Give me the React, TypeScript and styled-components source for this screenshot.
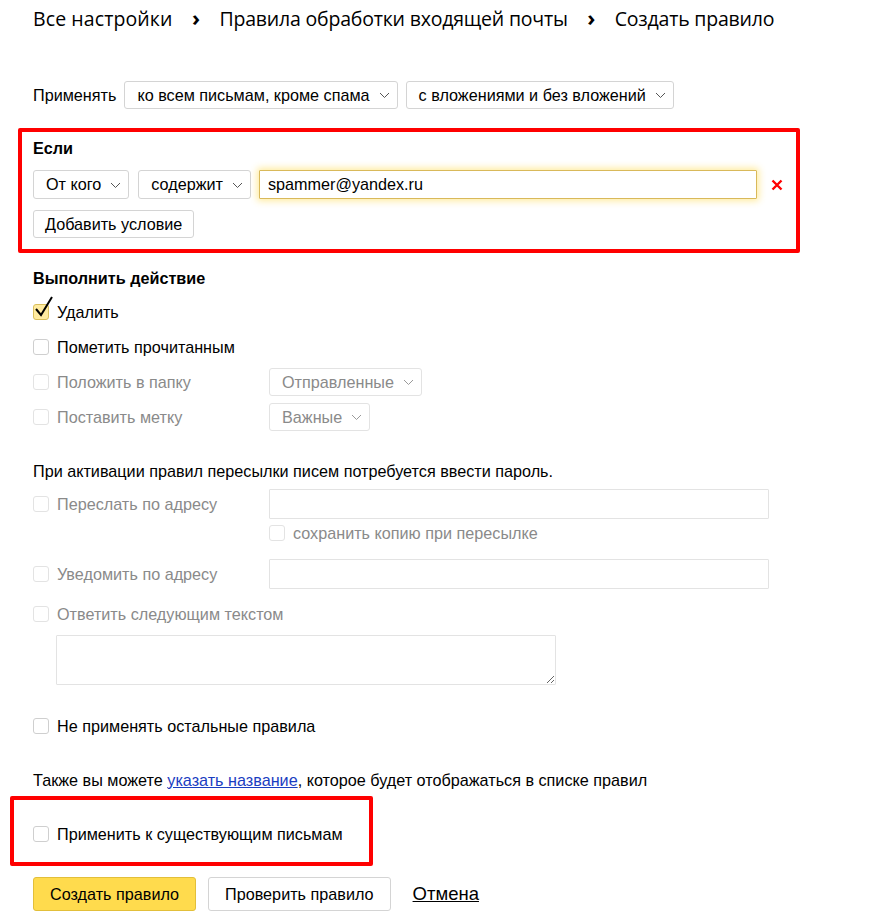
import styled, { createGlobalStyle } from "styled-components"

const GlobalStyle = createGlobalStyle`
  body {
    margin: 0;
    background: #fff;
    color: #000;
    font-family: "Liberation Sans", Arial, sans-serif;
    font-size: 16.2px;
  }
`

const Chevron = () => (
  <svg width="11" height="7" viewBox="0 0 11 7" fill="none">
    <path d="M1 1l4.5 4.5L10 1" stroke="currentColor" strokeWidth="1" />
  </svg>
)

const Select = ({ label, disabled }: { label: string; disabled?: boolean }) => (
  <SelectBox $disabled={disabled}>
    <span>{label}</span>
    <ArrowWrap $disabled={disabled}>
      <Chevron />
    </ArrowWrap>
  </SelectBox>
)

const Check = ({ checked, disabled }: { checked?: boolean; disabled?: boolean }) => (
  <CheckBox $checked={checked} $disabled={disabled}>
    {checked && (
      <CheckMark width="20" height="22" viewBox="0 0 20 22">
        <path d="M2 13l5 6L18 1" stroke="#000" strokeWidth="2" fill="none" />
      </CheckMark>
    )}
  </CheckBox>
)

const App = () => {
  return (
    <>
      <GlobalStyle />
      <Page>
        <Breadcrumbs>
          <Crumb>Все настройки</Crumb>
          <Sep>›</Sep>
          <Crumb>Правила обработки входящей почты</Crumb>
          <Sep>›</Sep>
          <Crumb>Создать правило</Crumb>
        </Breadcrumbs>

        <ApplyRow>
          <span>Применять</span>
          <Select label="ко всем письмам, кроме спама" />
          <Select label="с вложениями и без вложений" />
        </ApplyRow>

        <IfBox>
          <SectionTitle>Если</SectionTitle>
          <ConditionRow>
            <Select label="От кого" />
            <Select label="содержит" />
            <FocusInput defaultValue="spammer@yandex.ru" />
            <RemoveButton>
              <svg width="12" height="12" viewBox="0 0 12 12">
                <path d="M1.5 1.5l9 9M10.5 1.5l-9 9" stroke="#f00" strokeWidth="2.4" />
              </svg>
            </RemoveButton>
          </ConditionRow>
          <Button>Добавить условие</Button>
        </IfBox>

        <ActionsTitle>Выполнить действие</ActionsTitle>
        <OptionList>
          <Option>
            <CheckLabel>
              <Check checked />
              Удалить
            </CheckLabel>
          </Option>
          <Option>
            <CheckLabel>
              <Check />
              Пометить прочитанным
            </CheckLabel>
          </Option>
          <Option>
            <CheckLabel $disabled $fixed>
              <Check disabled />
              Положить в папку
            </CheckLabel>
            <Select label="Отправленные" disabled />
          </Option>
          <Option>
            <CheckLabel $disabled $fixed>
              <Check disabled />
              Поставить метку
            </CheckLabel>
            <Select label="Важные" disabled />
          </Option>
        </OptionList>

        <Notice>При активации правил пересылки писем потребуется ввести пароль.</Notice>

        <ForwardRow>
          <CheckLabel $disabled $fixed>
            <Check disabled />
            Переслать по адресу
          </CheckLabel>
          <TextInput disabled />
        </ForwardRow>
        <CopyRow>
          <CheckLabel $disabled>
            <Check disabled />
            сохранить копию при пересылке
          </CheckLabel>
        </CopyRow>
        <NotifyRow>
          <CheckLabel $disabled $fixed>
            <Check disabled />
            Уведомить по адресу
          </CheckLabel>
          <TextInput disabled />
        </NotifyRow>
        <ReplyRow>
          <CheckLabel $disabled>
            <Check disabled />
            Ответить следующим текстом
          </CheckLabel>
        </ReplyRow>
        <ReplyText disabled />

        <StopRow>
          <CheckLabel>
            <Check />
            Не применять остальные правила
          </CheckLabel>
        </StopRow>

        <NameHint>
          Также вы можете <Link href="#">указать название</Link>, которое будет отображаться в
          списке правил
        </NameHint>

        <ExistingBox>
          <CheckLabel>
            <Check />
            Применить к существующим письмам
          </CheckLabel>
        </ExistingBox>

        <Footer>
          <Button $primary $large>
            Создать правило
          </Button>
          <Button $large>Проверить правило</Button>
          <Cancel href="#">Отмена</Cancel>
        </Footer>
      </Page>
    </>
  )
}

const Page = styled.div`
  padding: 0 0 20px 33px;
`

const Breadcrumbs = styled.div`
  display: flex;
  align-items: center;
  height: 36px;
  font-family: "Open Sans", "Noto Sans", sans-serif;
  font-size: 19.5px;
  color: #000;
  letter-spacing: -0.2px;
`

const Crumb = styled.span`
  white-space: nowrap;

  &:first-child {
    letter-spacing: 0.1px;
  }
`

const Sep = styled.span`
  width: 47px;
  text-align: center;
  font-size: 22px;
  font-weight: 700;
  margin-top: -2px;
`

const ApplyRow = styled.div`
  display: flex;
  align-items: center;
  gap: 8px;
  margin-top: 45px;
  height: 28px;
`

const SelectBox = styled.div<{ $disabled?: boolean }>`
  display: inline-flex;
  align-items: center;
  box-sizing: border-box;
  height: 28px;
  padding: 0 7px 0 12px;
  border: 1px solid ${({ $disabled }) => ($disabled ? "#e3e3e3" : "#d4d4d4")};
  border-radius: 3px;
  background: #fff;
  color: ${({ $disabled }) => ($disabled ? "#8a8a8a" : "#000")};
  white-space: nowrap;
  gap: 9px;
`

const ArrowWrap = styled.span<{ $disabled?: boolean }>`
  display: flex;
  color: ${({ $disabled }) => ($disabled ? "#9a9a9a" : "#555")};
  margin-top: 1px;
`

const IfBox = styled.section`
  box-sizing: border-box;
  width: 782px;
  margin: 19px 0 0 -15px;
  padding: 6px 0 11px 11px;
  border: 4px solid #f00;
  border-radius: 2px;
`

const SectionTitle = styled.div`
  font-weight: 700;
  line-height: 20px;
`

const ConditionRow = styled.div`
  display: flex;
  align-items: center;
  gap: 9px;
  margin-top: 12px;
  height: 29px;

  ${SelectBox} {
    height: 29px;
  }
`

const FocusInput = styled.input`
  box-sizing: border-box;
  width: 498px;
  height: 29px;
  margin-left: -1px;
  padding: 0 8px;
  border: 1px solid #d9b95a;
  border-radius: 1px;
  font: inherit;
  color: #000;
  outline: none;
  box-shadow: 0 0 7px 2px rgba(255, 210, 40, 0.45);
`

const RemoveButton = styled.span`
  display: flex;
  margin-left: 5px;
`

const Button = styled.button<{ $primary?: boolean; $large?: boolean }>`
  box-sizing: border-box;
  height: ${({ $large }) => ($large ? "34px" : "28px")};
  padding: 0 ${({ $large }) => ($large ? "16px" : "11px")};
  margin-top: ${({ $large }) => ($large ? "0" : "11px")};
  border: 1px solid ${({ $primary }) => ($primary ? "#e2bf3a" : "#d4d4d4")};
  border-radius: 3px;
  background: ${({ $primary }) => ($primary ? "#ffdb4d" : "#fff")};
  color: #000;
  font-family: "Liberation Sans", Arial, sans-serif;
  font-size: 16.2px;
  cursor: pointer;
`

const ActionsTitle = styled(SectionTitle)`
  margin-top: 15px;
`

const OptionList = styled.div`
  display: flex;
  flex-direction: column;
  gap: 7px;
  margin-top: 10px;
`

const Option = styled.div`
  display: flex;
  align-items: center;
  height: 28px;
`

const CheckLabel = styled.label<{ $disabled?: boolean; $fixed?: boolean }>`
  display: flex;
  align-items: center;
  gap: 8px;
  line-height: 20px;
  color: ${({ $disabled }) => ($disabled ? "#8a8a8a" : "#000")};
  width: ${({ $fixed }) => ($fixed ? "236px" : "auto")};
  flex-shrink: 0;
`

const CheckBox = styled.span<{ $checked?: boolean; $disabled?: boolean }>`
  position: relative;
  box-sizing: border-box;
  width: 16px;
  height: 16px;
  border: 1px solid
    ${({ $checked, $disabled }) => ($checked ? "#d9bf5c" : $disabled ? "#e3e3e3" : "#cfcfcf")};
  border-radius: 3px;
  background: ${({ $checked }) => ($checked ? "#ffeba0" : "#fff")};
  flex-shrink: 0;
`

const CheckMark = styled.svg`
  position: absolute;
  left: 0;
  top: -9px;
`

const Notice = styled.div`
  margin-top: 30px;
  line-height: 20px;
`

const TextInput = styled.input`
  box-sizing: border-box;
  width: 500px;
  height: 30px;
  border: 1px solid #e3e3e3;
  border-radius: 1px;
  background: #fff;
`

const ForwardRow = styled.div`
  display: flex;
  align-items: center;
  margin-top: 8px;
  height: 30px;
`

const CopyRow = styled.div`
  margin: 4px 0 0 236px;
`

const NotifyRow = styled(ForwardRow)`
  margin-top: 16px;
`

const ReplyRow = styled.div`
  margin-top: 15px;
`

const ReplyText = styled.textarea`
  display: block;
  box-sizing: border-box;
  width: 500px;
  height: 50px;
  margin: 11px 0 0 23px;
  border: 1px solid #e3e3e3;
  border-radius: 1px;
  background: #fff;
`

const StopRow = styled.div`
  margin-top: 31px;
`

const NameHint = styled.div`
  margin-top: 34px;
  line-height: 20px;
`

const Link = styled.a`
  color: #1a3dc1;
  text-decoration: underline;
`

const ExistingBox = styled.section`
  box-sizing: border-box;
  width: 363px;
  height: 70px;
  margin: 6px 0 0 -23px;
  padding: 24px 0 0 19px;
  border: 4px solid #f00;
  border-radius: 2px;
`

const Footer = styled.div`
  display: flex;
  align-items: center;
  gap: 12px;
  margin-top: 11px;

  & > a {
    margin-left: 10px;
  }
`

const Cancel = styled.a`
  color: #000;
  font-size: 18.5px;
  text-decoration: underline;
`

export default App
